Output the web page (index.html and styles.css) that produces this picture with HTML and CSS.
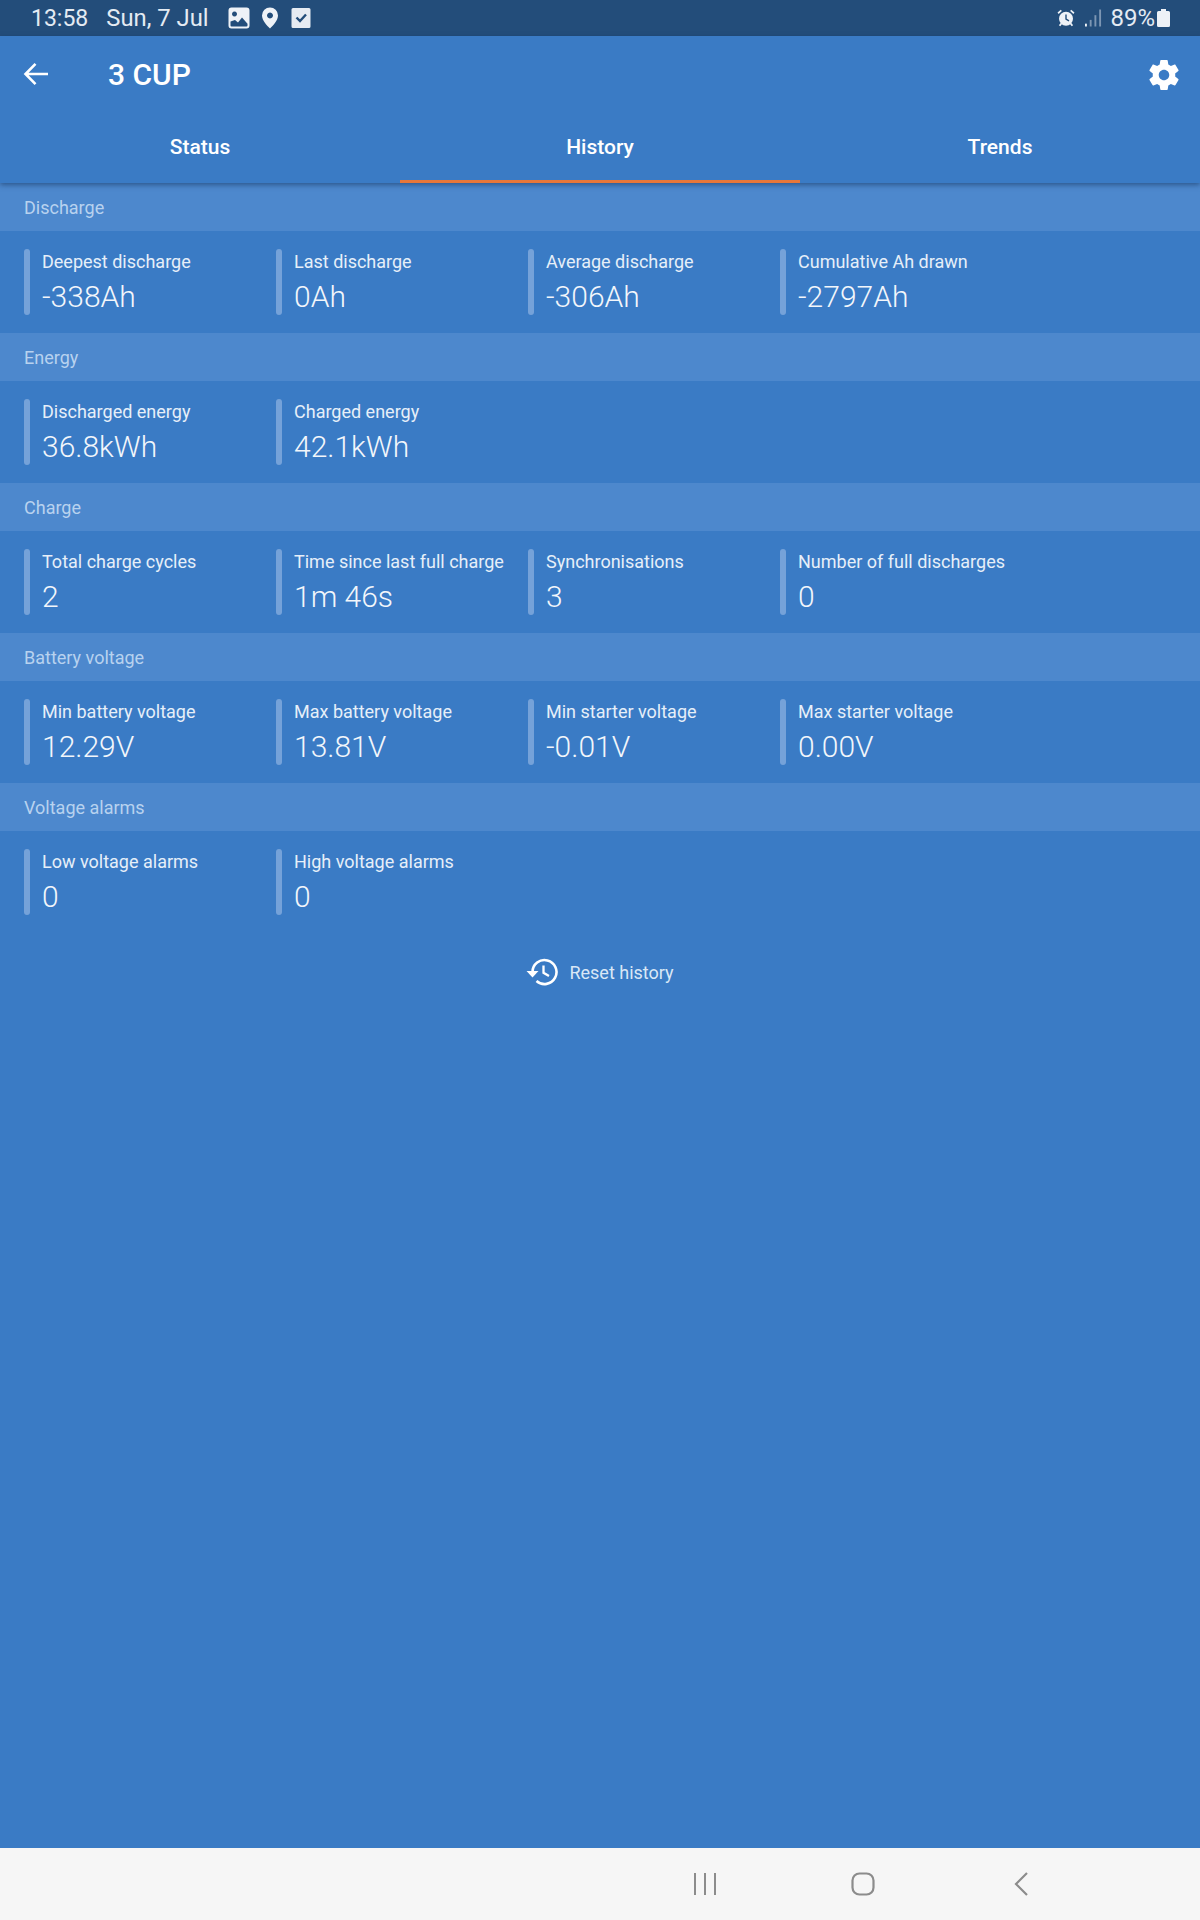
FILE: index.html
```html
<!DOCTYPE html>
<html lang="en">
<head>
<meta charset="utf-8">
<title>3 CUP</title>
<link rel="stylesheet" href="styles.css">
</head>
<body>
<div class="screen">
  <div class="statusbar">
    <div class="status-left">
      <span class="clock">13:58</span>
      <span class="date">Sun, 7 Jul</span>
      <svg class="si si-pic" viewBox="0 0 22 22"><path fill="#eef2f7" fill-rule="evenodd" d="M3.500 0.500h15a3 3 0 0 1 3 3v15a3 3 0 0 1-3 3h-15a3 3 0 0 1-3-3v-15a3 3 0 0 1 3-3zM6.500 4.500a2.500 2.500 0 1 0 .01 0zM2.500 14.500v4a1 1 0 0 0 1 1h15a1 1 0 0 0 1-1v-1.800l-5.500-6.200-4 5-3-2.500z"/></svg>
      <svg class="si si-pin" viewBox="0 0 18 22"><path fill="#eef2f7" fill-rule="evenodd" d="M9 0.500a8 8 0 0 1 8 8c0 5-5 10-8 13-3-3-8-8-8-13a8 8 0 0 1 8-8zM9 5.500a3 3 0 1 0 .01 0z"/></svg>
      <svg class="si si-check" viewBox="0 0 20 24"><path fill="#e6ebf2" d="M2 2h16a1.500 1.500 0 0 1 1.500 1.500v17a1.500 1.500 0 0 1-1.500 1.500h-16a1.500 1.500 0 0 1-1.500-1.500v-17a1.500 1.500 0 0 1 1.500-1.500z"/><path fill="none" stroke="#234d7a" stroke-width="2.400" d="M5.500 11.500l3.500 3.500 6-6.500"/></svg>
    </div>
    <div class="status-right">
      <svg class="si si-alarm" viewBox="0 0 18 18"><path fill="#eef2f7" d="M3.800 0.800l-3.300 2.800 1.100 1.300 3.300-2.800zM14.200 0.800l-1.100 1.300 3.300 2.800 1.100-1.300z"/><circle cx="9" cy="9.700" r="7" fill="#eef2f7"/><path fill="none" stroke="#234d7a" stroke-width="1.400" d="M9 5.500v4.500l3 1.800"/><path stroke="#eef2f7" stroke-width="1.800" d="M4.300 14.500l-1.700 2.300M13.700 14.500l1.700 2.300"/></svg>
      <svg class="si si-signal" viewBox="0 0 18 18"><rect x="0" y="15" width="2" height="3" fill="#eef2f7"/><rect x="5" y="11" width="2" height="7" fill="#7c96b3"/><rect x="10" y="6" width="2" height="12" fill="#7c96b3"/><rect x="15" y="0" width="2" height="18" fill="#7c96b3"/></svg>
      <span class="percent">89%</span>
      <svg class="si si-batt" viewBox="0 0 13 18"><path fill="#eef2f7" d="M4 0h5v2h2.500a1.500 1.500 0 0 1 1.500 1.500v13a1.500 1.500 0 0 1-1.500 1.500h-10a1.500 1.500 0 0 1-1.500-1.500v-13a1.500 1.500 0 0 1 1.500-1.500h2.500z"/></svg>
    </div>
  </div>

  <header class="appbar">
    <div class="titlebar">
      <svg class="back" viewBox="0 0 26 24"><path fill="none" stroke="#fff" stroke-width="2.600" d="M25 12H3M12.500 1.800L2.500 12l10 10.200"/></svg>
      <h1 class="title">3 CUP</h1>
      <svg class="gear" viewBox="0 0 24 24"><path fill="#fff" d="M19.430 12.980c.04-.32.070-.64.070-.98s-.03-.66-.07-.98l2.110-1.650c.19-.15.240-.42.120-.64l-2-3.460c-.12-.22-.39-.30-.61-.22l-2.490 1c-.52-.40-1.080-.73-1.690-.98l-.38-2.650C14.460 2.180 14.250 2 14 2h-4c-.25 0-.46.180-.49.420l-.38 2.650c-.61.250-1.170.590-1.690.98l-2.490-1c-.23-.090-.49 0-.61.220l-2 3.460c-.13.220-.07.490.12.640l2.110 1.650c-.04.320-.07.650-.07.980s.03.660.07.980l-2.110 1.650c-.19.150-.24.420-.12.640l2 3.460c.12.220.39.300.61.220l2.490-1c.52.400 1.080.730 1.690.980l.38 2.650c.03.240.24.420.49.420h4c.25 0 .46-.18.49-.42l.38-2.650c.61-.25 1.170-.59 1.690-.98l2.490 1c.23.090.49 0 .61-.22l2-3.460c.12-.22.070-.49-.12-.64l-2.110-1.650zM12 15.500c-1.930 0-3.500-1.570-3.500-3.500s1.570-3.500 3.500-3.500 3.500 1.570 3.500 3.500-1.570 3.500-3.500 3.500z"/></svg>
    </div>
    <nav class="tabs">
      <div class="tab">Status</div>
      <div class="tab tab-active">History</div>
      <div class="tab">Trends</div>
    </nav>
  </header>

  <main class="content">
    <section>
      <h2 class="section-head">Discharge</h2>
      <div class="grid">
        <div class="metric"><div class="label">Deepest discharge</div><div class="value">-338Ah</div></div>
        <div class="metric"><div class="label">Last discharge</div><div class="value">0Ah</div></div>
        <div class="metric"><div class="label">Average discharge</div><div class="value">-306Ah</div></div>
        <div class="metric"><div class="label">Cumulative Ah drawn</div><div class="value">-2797Ah</div></div>
      </div>
    </section>
    <section>
      <h2 class="section-head">Energy</h2>
      <div class="grid">
        <div class="metric"><div class="label">Discharged energy</div><div class="value">36.8kWh</div></div>
        <div class="metric"><div class="label">Charged energy</div><div class="value">42.1kWh</div></div>
      </div>
    </section>
    <section>
      <h2 class="section-head">Charge</h2>
      <div class="grid">
        <div class="metric"><div class="label">Total charge cycles</div><div class="value">2</div></div>
        <div class="metric"><div class="label">Time since last full charge</div><div class="value">1m 46s</div></div>
        <div class="metric"><div class="label">Synchronisations</div><div class="value">3</div></div>
        <div class="metric"><div class="label">Number of full discharges</div><div class="value">0</div></div>
      </div>
    </section>
    <section>
      <h2 class="section-head">Battery voltage</h2>
      <div class="grid">
        <div class="metric"><div class="label">Min battery voltage</div><div class="value">12.29V</div></div>
        <div class="metric"><div class="label">Max battery voltage</div><div class="value">13.81V</div></div>
        <div class="metric"><div class="label">Min starter voltage</div><div class="value">-0.01V</div></div>
        <div class="metric"><div class="label">Max starter voltage</div><div class="value">0.00V</div></div>
      </div>
    </section>
    <section>
      <h2 class="section-head">Voltage alarms</h2>
      <div class="grid">
        <div class="metric"><div class="label">Low voltage alarms</div><div class="value">0</div></div>
        <div class="metric"><div class="label">High voltage alarms</div><div class="value">0</div></div>
      </div>
    </section>
    <div class="reset">
      <svg class="reset-icon" viewBox="0 0 32 28"><path fill="none" stroke="#fff" stroke-width="2.600" d="M6.500 14a12 12 0 1 1 4 9"/><path fill="#fff" d="M0.500 13h12l-6 6.500z"/><path fill="none" stroke="#fff" stroke-width="2.300" d="M17.500 7.500v7.300l5.500 3.200"/></svg>
      <span class="reset-text">Reset history</span>
    </div>
  </main>

  <footer class="navbar">
    <svg class="nav-i nav-recent" viewBox="0 0 24 24"><path stroke="#8c8c8c" stroke-width="2" d="M2 1v22M12 1v22M22 1v22"/></svg>
    <svg class="nav-i nav-home" viewBox="0 0 24 24"><rect x="1.500" y="1.500" width="21" height="21" rx="7" fill="none" stroke="#8c8c8c" stroke-width="2.200"/></svg>
    <svg class="nav-i nav-back" viewBox="0 0 14 24"><path fill="none" stroke="#8c8c8c" stroke-width="2.200" d="M13 1L2 12l11 11"/></svg>
  </footer>
</div>
</body>
</html>
```

FILE: styles.css
```css
* { box-sizing: border-box; }
html, body { margin: 0; padding: 0; }
body { font-family: Roboto, "Noto Sans", sans-serif; }
.screen {
  width: 1200px;
  height: 1920px;
  display: flex;
  flex-direction: column;
  background: #3a7bc5;
  color: #fff;
  overflow: hidden;
}
.statusbar {
  height: 36px;
  flex: none;
  background: #234d7a;
  color: #e4ebf3;
  display: flex;
  justify-content: space-between;
  align-items: center;
  padding: 0 30px 0 31px;
  font-size: 23px;
}
.status-left, .status-right { display: flex; align-items: center; }
.date { margin-left: 18px; font-size: 23.800px; }
.si { display: block; flex: none; }
.si-pic { width: 22px; height: 22px; margin-left: 19px; }
.si-pin { width: 18px; height: 22px; margin-left: 11px; }
.si-check { width: 20px; height: 24px; margin-left: 12px; }
.si-alarm { width: 18px; height: 18px; margin-right: -2px; }
.si-signal { width: 17px; height: 18px; margin-left: 12px; }
.percent { margin-left: 8px; font-size: 24px; }
.si-batt { width: 13px; height: 18px; margin-left: 2px; }
.appbar {
  flex: none;
  height: 147px;
  background: #3a7bc5;
  box-shadow: 0 2px 5px rgba(20, 50, 90, 0.55);
  position: relative;
  z-index: 1;
  display: flex;
  flex-direction: column;
}
.titlebar {
  height: 76px;
  display: flex;
  align-items: center;
  padding: 0 18px 0 23px;
}
.back { width: 26px; height: 24px; flex: none; }
.title {
  margin: 0 0 0 59px;
  font-size: 30px;
  font-weight: 500;
  flex: 1;
}
.gear { width: 36px; height: 36px; flex: none; margin-top: 1px; }
.tabs { display: flex; flex: 1; }
.tab {
  flex: 1;
  display: flex;
  align-items: center;
  justify-content: center;
  font-size: 21px;
  font-weight: 500;
  padding-top: 1px;
  border-bottom: 3px solid transparent;
}
.tab-active { border-bottom-color: #e8773a; }
.section-head {
  margin: 0;
  height: 48px;
  background: #4d88cd;
  color: #b8d2ef;
  font-size: 18px;
  font-weight: 400;
  line-height: 48px;
  padding: 1px 0 0 24px;
}
.grid {
  display: grid;
  grid-template-columns: repeat(4, 252px);
  padding: 18px 24px;
  height: 102px;
}
.metric {
  padding: 1px 0 0 18px;
  position: relative;
  height: 66px;
}
.metric::before {
  content: "";
  position: absolute;
  left: 0;
  top: 0;
  width: 6px;
  height: 66px;
  border-radius: 3px;
  background: #75a2d9;
}
.label {
  font-size: 18px;
  line-height: 24px;
  color: #e6eff9;
  white-space: nowrap;
}
.value {
  font-size: 30px;
  font-weight: 300;
  line-height: 38px;
  margin-top: 4px;
  white-space: nowrap;
  color: #f2f6fb;
}
.content { flex: 1; }
.reset {
  display: flex;
  align-items: center;
  justify-content: center;
  height: 78px;
  gap: 11px;
}
.reset-icon { width: 32px; height: 28px; }
.reset-text { font-size: 18px; color: #d9e7f6; }
.navbar {
  flex: none;
  height: 72px;
  background: #f6f6f6;
  position: relative;
}
.nav-i { position: absolute; top: 24px; height: 24px; }
.nav-recent { left: 693px; width: 24px; }
.nav-home { left: 851px; width: 24px; }
.nav-back { left: 1014px; width: 14px; }
```
